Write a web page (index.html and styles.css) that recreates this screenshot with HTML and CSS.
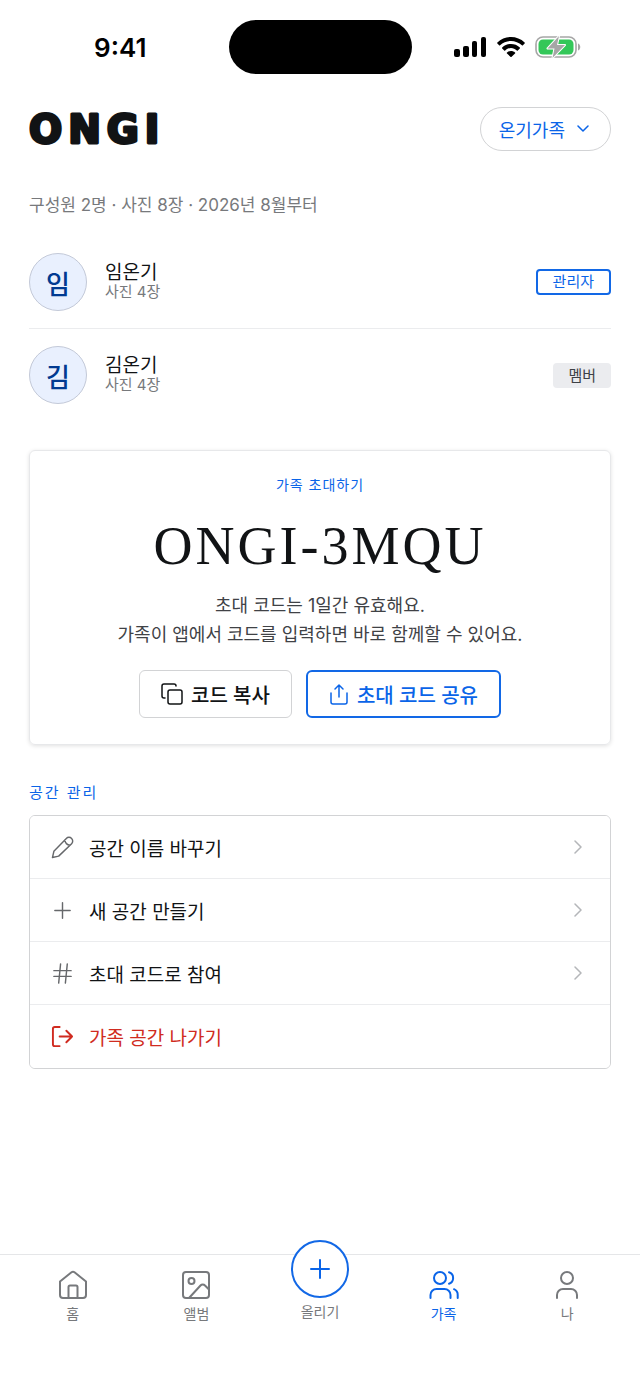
FILE: index.html
```
<!DOCTYPE html>
<html lang="ko">
<head>
    <meta charset="UTF-8">
    <meta name="viewport" content="width=device-width, initial-scale=1.0">
    <title>ONGI</title>
    <link rel="stylesheet" href="styles.css">
</head>
<body>
    <!-- Status bar -->
    <div class="status-bar">
        <span class="time">9:41</span>
        <div class="island"></div>
        <div class="status-icons">
            <svg width="33" height="20" viewBox="0 0 33 20">
                <rect x="0" y="12" width="6" height="8" rx="2"/>
                <rect x="9" y="9" width="6" height="11" rx="2"/>
                <rect x="18" y="4" width="5" height="16" rx="2"/>
                <rect x="27" y="0" width="5" height="20" rx="2"/>
            </svg>
            <svg width="28" height="20" viewBox="0 0 28 20">
                <path d="M14 0C19 0 24 2 27.600 5.400c.4.4.4.8 0 1.200l-1.700 1.700c-.3.3-.7.3-1 0C22 5.600 18 4 14 4S6 5.600 3.100 8.300c-.3.3-.7.3-1 0L.4 6.600C0 6.200 0 5.800.4 5.400 4 2 9 0 14 0Z"/>
                <path d="M14 7c3.300 0 6.400 1.200 8.800 3.400.3.3.3.8 0 1.100l-2 2c-.3.3-.7.3-1 0C18.200 12 16.200 11 14 11s-4.200 1-5.800 2.500c-.3.3-.7.3-1 0l-2-2c-.3-.3-.3-.8 0-1.100C7.600 8.200 10.700 7 14 7Z"/>
                <path d="M14 14c1.500 0 3 .5 4 1.500.4.4.4.7 0 1.100l-3.400 3.100c-.4.4-.8.4-1.200 0L10 16.600c-.4-.4-.4-.7 0-1.100 1-1 2.500-1.500 4-1.500Z"/>
            </svg>
            <svg width="46" height="22" viewBox="0 0 46 22">
                <rect x="1" y="1" width="40" height="20" rx="7" fill="none" stroke="#a6a6a6" stroke-width="1.600"/>
                <path d="M43 7.500c3 1 3 6 0 7z" fill="#a6a6a6"/>
                <rect x="3.500" y="3.500" width="35" height="15" rx="4.500" fill="#34c759"/>
                <path d="M24 0 12.500 12.500H19.500L17.500 22 30 9h-8z" fill="#a6a6a6" stroke="#fff" stroke-width="2" stroke-linejoin="round" paint-order="stroke"/>
            </svg>
        </div>
    </div>

    <header class="header">
        <h1 class="logo">
            <svg width="150" height="48" viewBox="0 0 150 48">
                <text class="logo-text" x="0" y="38">ONGI</text>
            </svg>
        </h1>
        <button class="space-picker" type="button">
            온기가족
            <svg class="line-icon" width="14" height="8" viewBox="0 0 14 8"><path d="m2 1 5 5 5-5"/></svg>
        </button>
    </header>

    <main class="content">
        <p class="summary">구성원 2명 · 사진 8장 · 2026년 8월부터</p>

        <!-- Members -->
        <ul class="members">
            <li class="member">
                <span class="avatar">임</span>
                <div class="member-info">
                    <span class="member-name">임온기</span>
                    <span class="member-photos">사진 4장</span>
                </div>
                <span class="badge badge-admin">관리자</span>
            </li>
            <li class="member">
                <span class="avatar">김</span>
                <div class="member-info">
                    <span class="member-name">김온기</span>
                    <span class="member-photos">사진 4장</span>
                </div>
                <span class="badge">멤버</span>
            </li>
        </ul>

        <!-- Invite card -->
        <section class="invite">
            <h2 class="invite-title">가족 초대하기</h2>
            <p class="invite-code">ONGI-3MQU</p>
            <p class="invite-text">초대 코드는 1일간 유효해요.<br>가족이 앱에서 코드를 입력하면 바로 함께할 수 있어요.</p>
            <div class="invite-actions">
                <button class="btn" type="button">
                    <svg class="line-icon" width="22" height="22" viewBox="0 0 22 22"><rect x="7" y="7" width="14" height="14" rx="2"/><path d="M4 15H3a2 2 0 0 1-2-2V3a2 2 0 0 1 2-2h10a2 2 0 0 1 2 2"/></svg>
                    코드 복사
                </button>
                <button class="btn btn-primary" type="button">
                    <svg class="line-icon" width="20" height="22" viewBox="0 0 20 22"><path d="M2 10v9a2 2 0 0 0 2 2h12a2 2 0 0 0 2-2v-9M10 14V2M6 6l4-4 4 4"/></svg>
                    초대 코드 공유
                </button>
            </div>
        </section>

        <!-- Space settings -->
        <section>
            <h2 class="section-title">공간 관리</h2>
            <div class="menu">
                <button class="menu-item" type="button">
                    <svg class="menu-icon" viewBox="0 0 24 24"><path d="M1.500 22.500 3 16 16 2.500a3.800 3.800 0 0 1 5.500 5.500L8 21zM14.500 4a6 6 0 0 0 5.500 5.500"/></svg>
                    <span class="menu-label">공간 이름 바꾸기</span>
                    <svg class="chevron" width="8" height="14" viewBox="0 0 8 14"><path d="m1 1 6 6-6 6"/></svg>
                </button>
                <button class="menu-item" type="button">
                    <svg class="menu-icon" viewBox="0 0 24 24"><path d="M4 12h16M12 4v16"/></svg>
                    <span class="menu-label">새 공간 만들기</span>
                    <svg class="chevron" width="8" height="14" viewBox="0 0 8 14"><path d="m1 1 6 6-6 6"/></svg>
                </button>
                <button class="menu-item" type="button">
                    <svg class="menu-icon" viewBox="0 0 24 24"><path d="M3 9h18M3 15h18M10 2 8 22M17 2l-2 20"/></svg>
                    <span class="menu-label">초대 코드로 참여</span>
                    <svg class="chevron" width="8" height="14" viewBox="0 0 8 14"><path d="m1 1 6 6-6 6"/></svg>
                </button>
                <button class="menu-item menu-item-danger" type="button">
                    <svg class="menu-icon" viewBox="0 0 24 24"><path d="M9 2H4a2 2 0 0 0-2 2v16a2 2 0 0 0 2 2h5M9 12h13M16 6l6 6-6 6"/></svg>
                    <span class="menu-label">가족 공간 나가기</span>
                </button>
            </div>
        </section>
    </main>

    <!-- Bottom tabs -->
    <nav class="tabs">
        <a class="tab" href="#home">
            <svg class="tab-icon" viewBox="0 0 30 30"><path d="M2 11.500 13.500 2.300a2.500 2.500 0 0 1 3 0L28 11.500V25a3 3 0 0 1-3 3H5a3 3 0 0 1-3-3zM10.500 28V17a1.500 1.500 0 0 1 1.500-1.500h6a1.500 1.500 0 0 1 1.500 1.500v11"/></svg>
            홈
        </a>
        <a class="tab" href="#album">
            <svg class="tab-icon" viewBox="0 0 30 30"><rect x="2" y="2" width="26" height="26" rx="3"/><circle cx="10.500" cy="11" r="3"/><path d="m8 28 11.500-12.500a3 3 0 0 1 4.500 0l4 4"/></svg>
            앨범
        </a>
        <a class="tab" href="#upload">
            <span class="upload">
                <svg class="upload-icon" width="20" height="20" viewBox="0 0 20 20"><path d="M1 10h18M10 1v18"/></svg>
            </span>
            올리기
        </a>
        <a class="tab tab-active" href="#family">
            <svg class="tab-icon" viewBox="0 0 30 30"><circle cx="11" cy="8" r="6"/><path d="M1.500 28v-3a6 6 0 0 1 6-6h8a6 6 0 0 1 6 6v3M20 2.300a6 6 0 0 1 0 11.400M25 19.200a6 6 0 0 1 3.700 5.800v3"/></svg>
            가족
        </a>
        <a class="tab" href="#me">
            <svg class="tab-icon" viewBox="0 0 30 30"><circle cx="15" cy="8" r="6"/><path d="M5 28v-3a6 6 0 0 1 6-6h8a6 6 0 0 1 6 6v3"/></svg>
            나
        </a>
    </nav>
</body>
</html>
```
FILE: styles.css
```
* {
    box-sizing: border-box;
}
body {
    margin: 0;
    min-height: 100vh;
    display: flex;
    flex-direction: column;
    background-color: #fff;
    color: #111315;
    font-family: Inter, "Noto Sans CJK KR", sans-serif;
}
h1, h2, p, ul {
    margin: 0;
    padding: 0;
    font-weight: 400;
}
svg {
    display: block;
    flex: none;
}
button {
    font-family: inherit;
    color: inherit;
    background-color: #fff;
    cursor: pointer;
}
.line-icon, .menu-icon, .chevron, .tab-icon, .upload-icon {
    fill: none;
    stroke: currentColor;
    stroke-width: 1.5;
    stroke-linecap: round;
    stroke-linejoin: round;
}

/* Status bar */
.status-bar {
    display: grid;
    grid-template-columns: 1fr 183px 1fr;
    align-items: center;
    padding-top: 20px;
}
.time {
    padding-left: 12px;
    text-align: center;
    font-size: 26px;
    font-weight: 600;
    color: #000;
}
.island {
    height: 54px;
    border-radius: 27px;
    background-color: #000;
}
.status-icons {
    display: flex;
    justify-content: center;
    align-items: center;
    gap: 10px;
    padding-right: 16px;
}

/* Header */
.header {
    display: flex;
    justify-content: space-between;
    align-items: center;
    padding: 31px 29px 0;
}
.logo-text {
    font-family: "DejaVu Sans", sans-serif;
    font-size: 39px;
    font-weight: 700;
    letter-spacing: 6px;
    fill: #111315;
    stroke: #111315;
    stroke-width: 3px;
    stroke-linejoin: round;
}
.space-picker {
    display: flex;
    align-items: center;
    gap: 11px;
    height: 44px;
    padding: 0 20px 0 18px;
    border: 1px solid #d2d3d5;
    border-radius: 22px;
    font-size: 18px;
    color: #0a64e8;
}

.content {
    flex: 1;
    padding: 40px 29px 0;
}
.summary {
    font-size: 17px;
    line-height: 24px;
    color: #77797c;
}

/* Members */
.members {
    margin-top: 19px;
    list-style: none;
}
.member {
    display: flex;
    align-items: center;
    gap: 18px;
    padding: 17px 0;
}
.member + .member {
    border-top: 1px solid #ebecee;
}
.avatar {
    display: flex;
    justify-content: center;
    align-items: center;
    width: 58px;
    height: 58px;
    border: 1px solid #c3c9d8;
    border-radius: 50%;
    background-color: #e9f0fe;
    color: #003a91;
    font-size: 26px;
    font-weight: 500;
}
.member-info {
    flex: 1;
    display: flex;
    flex-direction: column;
}
.member-name {
    font-size: 19px;
    line-height: 20px;
}
.member-photos {
    font-size: 15px;
    line-height: 18px;
    color: #77797c;
}
.badge {
    padding: 0 15px;
    border-radius: 4px;
    background-color: #ebecef;
    color: #3e4146;
    font-size: 15px;
    line-height: 25px;
}
.badge-admin {
    border: 2px solid #1268e6;
    background-color: #fff;
    color: #0a64e8;
    line-height: 22px;
}

/* Invite card */
.invite {
    margin-top: 29px;
    padding: 24px 20px 26px;
    border: 1px solid #e7e8ea;
    border-radius: 6px;
    box-shadow: 0 1px 4px rgba(0, 0, 0, 0.12);
    text-align: center;
}
.invite-title {
    font-size: 14px;
    line-height: 20px;
    letter-spacing: 1px;
    color: #0a64e8;
}
.invite-code {
    margin-top: 21px;
    font-family: "Liberation Serif", serif;
    font-size: 54px;
    line-height: 60px;
    letter-spacing: 3px;
}
.invite-text {
    margin-top: 15px;
    font-size: 18px;
    line-height: 29px;
    color: #404246;
}
.invite-actions {
    display: flex;
    justify-content: center;
    gap: 14px;
    margin-top: 21px;
}
.btn {
    display: flex;
    align-items: center;
    gap: 8px;
    height: 48px;
    padding: 0 21px;
    border: 1px solid #d2d3d5;
    border-radius: 6px;
    font-size: 20px;
    font-weight: 500;
}
.btn-primary {
    border: 2px solid #1268e6;
    color: #0a64e8;
}

/* Space settings */
.section-title {
    margin-top: 37px;
    font-size: 15px;
    line-height: 22px;
    letter-spacing: 2px;
    color: #0a64e8;
}
.menu {
    margin-top: 11px;
    border: 1px solid #d2d3d5;
    border-radius: 6px;
    overflow: hidden;
}
.menu-item {
    display: flex;
    align-items: center;
    gap: 15px;
    width: 100%;
    height: 63px;
    padding: 0 28px 0 21px;
    border: none;
    border-bottom: 1px solid #ebecee;
    font-size: 19px;
    text-align: left;
}
.menu-item:last-child {
    border-bottom: none;
}
.menu-item-danger {
    color: #d02b20;
}
.menu-icon {
    width: 23px;
    height: 23px;
    color: #66686b;
}
.menu-item-danger .menu-icon {
    color: inherit;
    stroke-width: 2;
}
.menu-label {
    flex: 1;
}
.chevron {
    color: #b4b6b9;
}

/* Bottom tabs */
.tabs {
    display: grid;
    grid-template-columns: repeat(5, 1fr);
    height: 131px;
    padding: 15px 11px 0;
    border-top: 1px solid #e5e6e8;
}
.tab {
    display: flex;
    flex-direction: column;
    align-items: center;
    gap: 4px;
    font-size: 14px;
    line-height: 20px;
    color: #77797c;
    text-decoration: none;
}
.tab-active {
    color: #0a64e8;
}
.tab-icon {
    width: 30px;
    height: 30px;
    stroke-width: 2;
}
/* the upload circle rises over the top border */
.upload {
    display: flex;
    justify-content: center;
    align-items: center;
    width: 58px;
    height: 58px;
    margin-top: -30px;
    border: 2px solid #1268e6;
    border-radius: 50%;
    background-color: #fff;
    color: #0a64e8;
}
.upload-icon {
    stroke-width: 2;
}
```
